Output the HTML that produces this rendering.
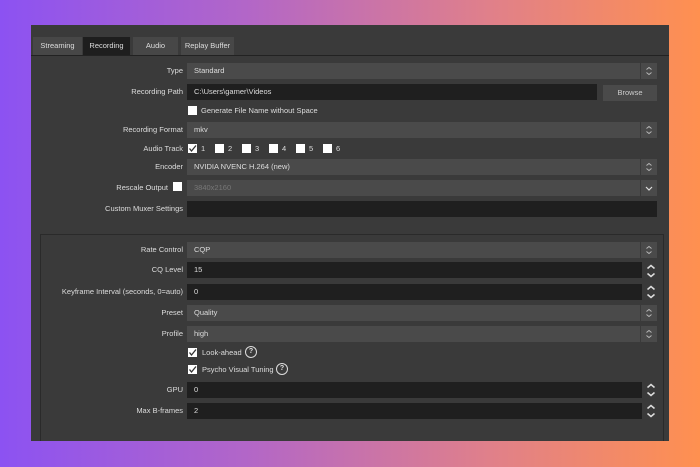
<!DOCTYPE html>
<html><head><style>
body{margin:0;width:700px;height:467px;overflow:hidden;position:relative;font-family:"Liberation Sans",sans-serif;font-size:7.5px;color:#e0e0e0;
background:linear-gradient(90deg,#8c52f2 0%,#b266c8 35%,#e0808a 70%,#ff9050 100%);}
.win{position:absolute;left:31px;top:25px;width:638px;height:416px;background:#3a3a3a;overflow:hidden}
.tabbar{position:absolute;left:0;top:30px;width:638px;height:1px;background:#222;}
.tab{position:absolute;top:12px;height:18px;background:#474747;line-height:18px;text-align:center;color:#ddd;}
.lbl{position:absolute;text-align:right;white-space:nowrap;color:#ddd}
.f{position:absolute;height:16px;line-height:16px;padding-left:7px;box-sizing:border-box;color:#ddd}
.c{background:#4a4a4a}.d{background:#1f1f1f}
.sp{position:absolute;width:16px;height:16px;background:#4a4a4a;}
.sp svg{position:absolute;left:0;top:0}
.cb{position:absolute;width:9px;height:9px;background:#fff;}
.q{position:absolute;width:10px;height:10px;border:1.3px solid #ddd;border-radius:50%;text-align:center;line-height:10px;font-size:7px;font-weight:bold}
.grp{position:absolute;left:9px;top:209px;width:624px;height:220px;border:1px solid #2a2a2a;box-sizing:border-box}
</style></head><body>
<div class="win">
<div class="tab" style="left:2px;width:49px">Streaming</div>
<div class="tab" style="left:52px;width:47px;background:#1e1e1e">Recording</div>
<div class="tab" style="left:102px;width:45px">Audio</div>
<div class="tab" style="left:150px;width:53px">Replay Buffer</div>
<div class="tabbar"></div>
<div class="grp"></div>
</div>
<div id="c"></div>
<script>
var H='';
function L(t,y){H+='<div class="lbl" style="top:'+y+'px;right:517px;line-height:16px">'+t+'</div>';}
function F(cls,x,y,w,t){H+='<div class="f '+cls+'" style="left:'+x+'px;top:'+y+'px;width:'+w+'px">'+t+'</div>';}
var chev='<svg width="16" height="16"><path d="M5.5 6.5 8 4.5 10.5 6.5M5.5 9.5 8 11.5 10.5 9.5" stroke="#bbb" fill="none" stroke-width="0.9"/></svg>';
var chev2='<svg width="16" height="18"><path d="M4.5 6.5 8 3.5 11.5 6.5M4.5 11.5 8 14.5 11.5 11.5" stroke="#ddd" fill="none" stroke-width="1.5"/></svg>';
var down='<svg width="16" height="16"><path d="M5 7 8 10 11 7" stroke="#ddd" fill="none" stroke-width="1.2"/></svg>';
function S(x,y,s,bg){H+='<div class="sp" style="left:'+x+'px;top:'+y+'px;'+(bg||'')+'">'+s+'</div>';}
function CB(x,y,chk){H+='<div class="cb" style="left:'+x+'px;top:'+y+'px">'+(chk?'<svg width="9" height="9"><path d="M1.5 4.5 3.5 7 8 1.5" stroke="#333" fill="none" stroke-width="1.3"/></svg>':'')+'</div>';}
function T(t,x,y){H+='<div style="position:absolute;left:'+x+'px;top:'+y+'px;color:#ddd">'+t+'</div>';}
L('Type',63);F('c',187,63,453,'Standard');S(641,63,chev);
L('Recording Path',84);F('d',187,84,410,'C:\\Users\\gamer\\Videos');
H+='<div class="f c" style="left:603px;top:85px;width:54px;padding:0;text-align:center;color:#ccc">Browse</div>';
CB(188,106);T('Generate File Name without Space',201,106);
L('Recording Format',122);F('c',187,122,453,'mkv');S(641,122,chev);
L('Audio Track',141);CB(188,144,1);T('1',201,144);
[2,3,4,5,6].forEach(function(n,i){var x=215+i*27;CB(x,144);T(n,x+13,144);});
L('Encoder',159);F('c',187,159,453,'NVIDIA NVENC H.264 (new)');S(641,159,chev);
H+='<div class="lbl" style="top:180px;right:532px;line-height:16px">Rescale Output</div>';CB(173,182);
F('c',187,180,453,'<span style="color:#777">3840x2160</span>');S(641,180,down);
L('Custom Muxer Settings',201);F('d',187,201,470,'');
L('Rate Control',242);F('c',187,242,453,'CQP');S(641,242,chev);
L('CQ Level',262);F('d',187,262,455,'15');S(643,262,chev2,'background:#3a3a3a;height:18px');
L('Keyframe Interval (seconds, 0=auto)',284);F('d',187,284,455,'0');S(643,283,chev2,'background:#3a3a3a;height:18px');
L('Preset',305);F('c',187,305,453,'Quality');S(641,305,chev);
L('Profile',326);F('c',187,326,453,'high');S(641,326,chev);
CB(188,348,1);T('Look-ahead',202,348);H+='<div class="q" style="left:245px;top:346px">?</div>';
CB(188,365,1);T('Psycho Visual Tuning',202,365);H+='<div class="q" style="left:276px;top:363px">?</div>';
L('GPU',382);F('d',187,382,455,'0');S(643,381,chev2,'background:#3a3a3a;height:18px');
L('Max B-frames',403);F('d',187,403,455,'2');S(643,402,chev2,'background:#3a3a3a;height:18px');
document.getElementById('c').innerHTML=H;
</script>
</body></html>
